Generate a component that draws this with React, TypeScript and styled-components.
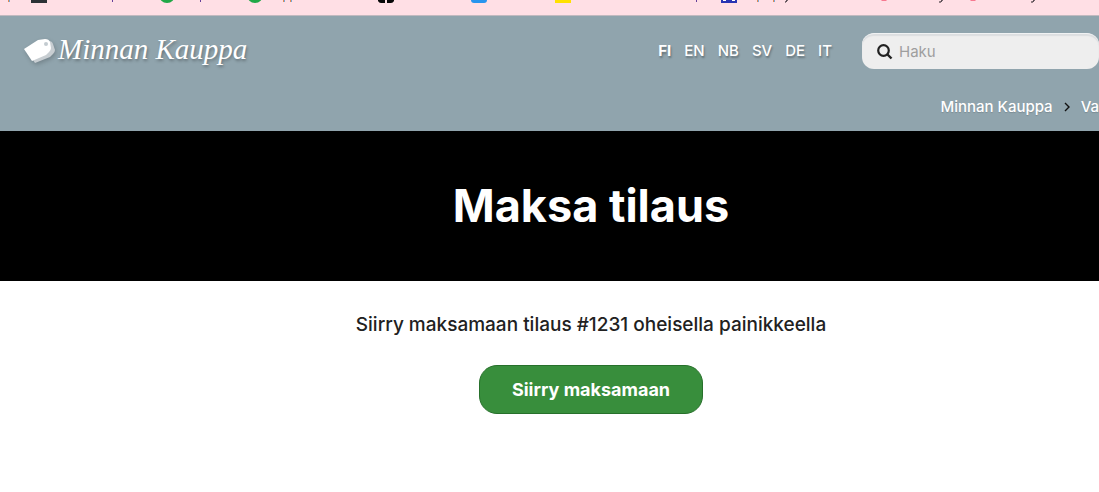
import React from "react";
import styled, { createGlobalStyle } from "styled-components";

const GlobalStyle = createGlobalStyle`
  *, *::before, *::after { box-sizing: border-box; }
  body { margin: 0; background: #fff; color: #212121; font-family: Inter, "Liberation Sans", sans-serif; }
`;

const Page = styled.div`
  overflow-x: hidden;
`;

const BookmarkStrip = styled.div`
  height: 16px;
  overflow: hidden;
  background: #ffdfe5;
  border-bottom: 1px solid #c1b9bf;
  svg { display: block; }
`;

const Header = styled.header`
  background: #90a4ad;
  padding: 17px 0 12px;
`;

const TopRow = styled.div`
  display: flex;
  align-items: center;
  height: 36px;
  padding-left: 24px;
`;

const Logo = styled.a`
  display: flex;
  align-items: center;
  gap: 3px;
  margin-right: auto;
  color: #fff;
  text-decoration: none;
  white-space: nowrap;
  font: italic 29px/32px "Liberation Serif", serif;
  text-shadow: 1px 2px 3px rgba(0, 0, 0, 0.3);
  svg { filter: drop-shadow(1px 2px 2px rgba(0, 0, 0, 0.2)); }
`;

const LogoText = styled.span`
  padding-bottom: 4px;
`;

const Languages = styled.nav`
  display: flex;
  gap: 13px;
  margin-right: 30px;
`;

const Language = styled.a<{ $active?: boolean }>`
  color: #fff;
  font-size: 15px;
  line-height: 24px;
  font-weight: ${(p) => (p.$active ? 700 : 500)};
  text-decoration: none;
  text-shadow: 1px 2px 2px rgba(0, 0, 0, 0.3);
`;

const Search = styled.label`
  display: flex;
  align-items: center;
  gap: 6px;
  width: 237px;
  height: 36px;
  padding: 0 14px;
  border-radius: 12px;
  background: #eee;
  box-shadow: inset 0 2px 1px #dcdee0;
  border-top: 1px solid #f0f2f3;
  svg { flex: none; }
`;

const SearchInput = styled.input`
  flex: 1;
  min-width: 0;
  padding: 0;
  border: 0;
  outline: 0;
  background: transparent;
  color: #212121;
  font: 400 15px/24px Inter, "Liberation Sans", sans-serif;
  &::placeholder { color: #9e9e9e; opacity: 1; }
`;

const Breadcrumbs = styled.nav`
  display: flex;
  align-items: center;
  justify-content: flex-end;
  gap: 10px;
  margin-top: 26px;
  font-size: 15px;
  line-height: 24px;
  font-weight: 500;
  white-space: nowrap;
`;

const Crumb = styled.a`
  color: #fff;
  text-decoration: none;
  text-shadow: 0 1px 1px rgba(0, 0, 0, 0.15);
`;

const Hero = styled.section`
  display: flex;
  align-items: center;
  justify-content: center;
  min-height: 150px;
  padding-left: 83px;
  background: #000;
`;

const Title = styled.h1`
  margin: 0;
  color: #fff;
  font-size: 45px;
  line-height: 56px;
  font-weight: 700;
`;

const Content = styled.main`
  display: flex;
  flex-direction: column;
  align-items: center;
  gap: 26px;
  padding: 30px 0 30px 83px;
`;

const Lead = styled.p`
  margin: 0;
  font-size: 19px;
  line-height: 28px;
  font-weight: 500;
`;

const PayButton = styled.button`
  min-width: 224px;
  height: 49px;
  padding: 0 24px;
  border: 1px solid #27702b;
  border-radius: 18px;
  background: #388e3c;
  color: #fff;
  font: 700 18px/28px Inter, "Liberation Sans", sans-serif;
  cursor: pointer;
`;

const languages = ["FI", "EN", "NB", "SV", "DE", "IT"];

function BookmarkIcons() {
  return (
    <svg width="1099" height="4" viewBox="0 0 1099 4" aria-hidden="true">
      <path d="M31 0h16v3H31z" fill="#2c3135" />
      <circle cx="167" cy="-5" r="8" fill="#21a847" />
      <circle cx="255" cy="-5" r="8" fill="#21a847" />
      <path d="M378 0h7v3h-4q-2 0-3-2zM387 0h7v1q-1 2-3 2h-4z" fill="#080808" />
      <path d="M471 0h16q0 3-3 3h-10q-3 0-3-3z" fill="#2895ee" />
      <path d="M555 0h16v3h-16z" fill="#ffe100" />
      <path d="M721 0h16v3h-16z" fill="#2934b3" />
      <path d="M723 0h3v1h-3zM732 0h3v1h-3z" fill="#fff" />
      <path d="M881 0h6l-1 1h-4zM970 0h6l-1 1h-4z" fill="#f77990" />
      <path d="M8 0h1v2H8zM283 0h1v2h-1zM290 0h1v2h-1zM757 0h1v2h-1zM773 0h1v2h-1z" fill="#e58a50" />
      <path d="M9 0h1v2H9zM284 0h1v2h-1zM291 0h1v2h-1zM758 0h1v2h-1zM774 0h1v2h-1z" fill="#73a9dc" />
      <path d="M112 0h1v2h-1zM200 0h1v2h-1zM696 0h1v2h-1z" fill="#65409a" />
      <path d="M788 0h-1l-1 2h-1M943 0h-1l-1 2h-2M1035 0h-1l-1 2h-2" fill="none" stroke="#272027" />
    </svg>
  );
}

export default function App() {
  return (
    <>
      <GlobalStyle />
      <Page>
        <BookmarkStrip>
          <BookmarkIcons />
        </BookmarkStrip>
        <Header>
          <TopRow>
            <Logo href="#">
              <svg width="31" height="26" viewBox="0 0 31 26" aria-hidden="true">
                <path d="m11 25-2-3L25 3q3 0 4 3l2 6q0 2-2 4l-3 3z" fill="#c8ced2" />
                <path d="M0 11 14 2l7-1q4 0 5 3l1 6q0 2-2 4l-3 3L8 23z" fill="#fff" />
                <circle cx="22" cy="6" r="2" fill="#c3cbd0" />
              </svg>
              <LogoText>Minnan Kauppa</LogoText>
            </Logo>
            <Languages aria-label="Kieli">
              {languages.map((code) => (
                <Language key={code} href="#" $active={code === "FI"}>
                  {code}
                </Language>
              ))}
            </Languages>
            <Search>
              <svg width="17" height="17" viewBox="0 0 17 17" fill="none" stroke="#212121" aria-hidden="true">
                <circle cx="7.5" cy="7.5" r="5.3" strokeWidth="2.2" />
                <path d="m11.5 11.5 4 4" strokeWidth="2.4" />
              </svg>
              <SearchInput type="search" placeholder="Haku" aria-label="Haku" />
            </Search>
          </TopRow>
          <Breadcrumbs aria-label="Murupolku">
            <Crumb href="#">Minnan Kauppa</Crumb>
            <svg width="8" height="10" viewBox="0 0 8 10" fill="none" stroke="#111" strokeWidth="1.4" aria-hidden="true">
              <path d="m2 1 4 4-4 4" />
            </svg>
            <Crumb href="#">Va</Crumb>
          </Breadcrumbs>
        </Header>
        <Hero>
          <Title>Maksa tilaus</Title>
        </Hero>
        <Content>
          <Lead>Siirry maksamaan tilaus #1231 oheisella painikkeella</Lead>
          <PayButton type="button">Siirry maksamaan</PayButton>
        </Content>
      </Page>
    </>
  );
}
